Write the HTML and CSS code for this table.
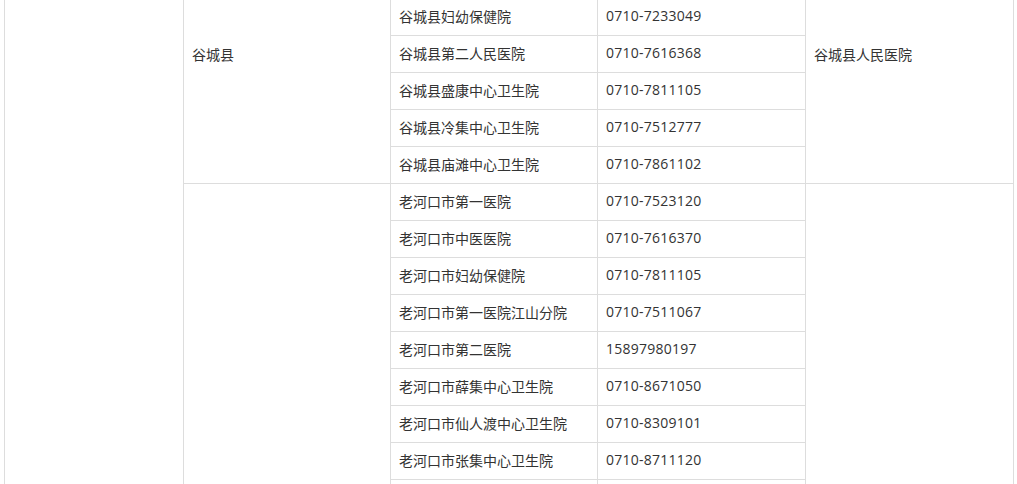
FILE: index.html
```html
<!DOCTYPE html>
<html lang="zh-CN">
<head>
<meta charset="utf-8">
<title>医院列表</title>
<link rel="stylesheet" href="styles.css">
</head>
<body>
<div class="page">
  <table class="hosp-table">
    <colgroup>
      <col class="c-city">
      <col class="c-county">
      <col class="c-name">
      <col class="c-phone">
      <col class="c-center">
    </colgroup>
    <tbody>
      <tr>
        <td class="cell-city" rowspan="15"></td>
        <td class="cell-group cell-shift" rowspan="5">谷城县</td>
        <td>谷城县妇幼保健院</td>
        <td class="tel">0710-7233049</td>
        <td class="cell-group cell-shift" rowspan="5">谷城县人民医院</td>
      </tr>
      <tr><td>谷城县第二人民医院</td><td class="tel">0710-7616368</td></tr>
      <tr><td>谷城县盛康中心卫生院</td><td class="tel">0710-7811105</td></tr>
      <tr><td>谷城县冷集中心卫生院</td><td class="tel">0710-7512777</td></tr>
      <tr><td>谷城县庙滩中心卫生院</td><td class="tel">0710-7861102</td></tr>
      <tr>
        <td class="cell-group" rowspan="10"></td>
        <td>老河口市第一医院</td>
        <td class="tel">0710-7523120</td>
        <td class="cell-group" rowspan="10"></td>
      </tr>
      <tr><td>老河口市中医医院</td><td class="tel">0710-7616370</td></tr>
      <tr><td>老河口市妇幼保健院</td><td class="tel">0710-7811105</td></tr>
      <tr><td>老河口市第一医院江山分院</td><td class="tel">0710-7511067</td></tr>
      <tr><td>老河口市第二医院</td><td class="tel">15897980197</td></tr>
      <tr><td>老河口市薛集中心卫生院</td><td class="tel">0710-8671050</td></tr>
      <tr><td>老河口市仙人渡中心卫生院</td><td class="tel">0710-8309101</td></tr>
      <tr><td>老河口市张集中心卫生院</td><td class="tel">0710-8711120</td></tr>
      <tr><td></td><td></td></tr>
      <tr><td></td><td></td></tr>
    </tbody>
  </table>
</div>
</body>
</html>
```

FILE: styles.css
```css
html, body {
  margin: 0;
  padding: 0;
  background: #ffffff;
}

body {
  font-family: "Noto Sans CJK SC", "Noto Sans", sans-serif;
  font-size: 14px;
  color: #333333;
  overflow: hidden;
}

.page {
  padding: 0 3px 0 4px;
  height: 484px;
  overflow: hidden;
}

.hosp-table {
  margin-top: -2px;
  width: 1010px;
  table-layout: fixed;
  border-collapse: separate;
  border-spacing: 0;
  border-top: 1px solid #dddddd;
  border-left: 1px solid #dddddd;
}

.c-city { width: 179px; }
.c-county { width: 207px; }
.c-name { width: 207px; }
.c-phone { width: 208px; }
.c-center { width: 208px; }

.hosp-table td {
  box-sizing: border-box;
  height: 37px;
  padding: 0 8px 2px;
  line-height: 20px;
  vertical-align: middle;
  border-right: 1px solid #dddddd;
  border-bottom: 1px solid #dddddd;
  white-space: nowrap;
  overflow: hidden;
}

.hosp-table td.tel {
  font-family: "Open Sans", "Noto Sans CJK SC", sans-serif;
  letter-spacing: 0.25px;
}

.hosp-table td.cell-shift {
  padding-bottom: 75px;
}
```
